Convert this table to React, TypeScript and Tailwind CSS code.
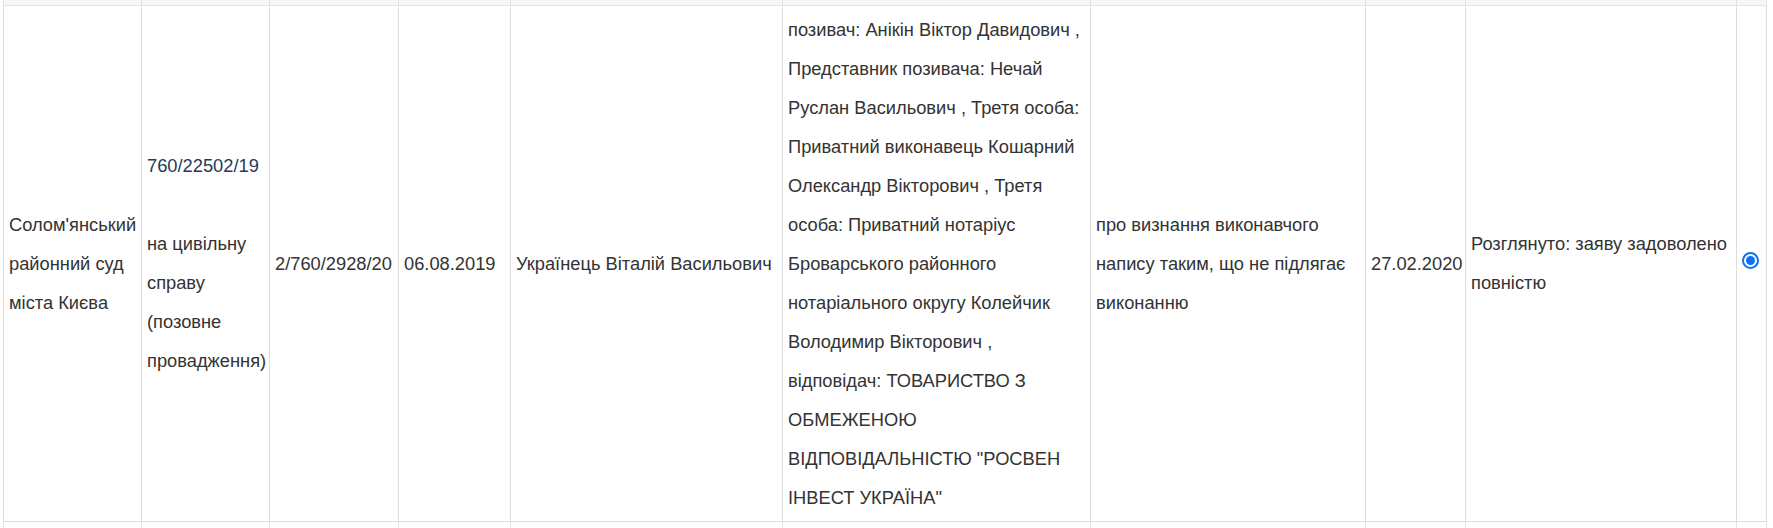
import React from 'react';

type Row = {
    court: string[]
    caseNum: string
    caseKind: string[]
    procNum: string
    date: string
    judge: string
    parties: string[]
    subject: string[]
    decisionDate: string
    status: string[]
}

const row: Row = {
    court: ["Солом'янський", 'районний суд', 'міста Києва'],
    caseNum: '760/22502/19',
    caseKind: ['на цивільну', 'справу', '(позовне', 'провадження)'],
    procNum: '2/760/2928/20',
    date: '06.08.2019',
    judge: 'Українець Віталій Васильович',
    parties: [
        'позивач: Анікін Віктор Давидович ,',
        'Представник позивача: Нечай',
        'Руслан Васильович , Третя особа:',
        'Приватний виконавець Кошарний',
        'Олександр Вікторович , Третя',
        'особа: Приватний нотаріус',
        'Броварського районного',
        'нотаріального округу Колейчик',
        'Володимир Вікторович ,',
        'відповідач: ТОВАРИСТВО З',
        'ОБМЕЖЕНОЮ',
        'ВІДПОВІДАЛЬНІСТЮ "РОСВЕН',
        'ІНВЕСТ УКРАЇНА"',
    ],
    subject: ['про визнання виконавчого', 'напису таким, що не підлягає', 'виконанню'],
    decisionDate: '27.02.2020',
    status: ['Розглянуто: заяву задоволено', 'повністю'],
};

const widths = ['w-[138px]', 'w-[128px]', 'w-[129px]', 'w-[112px]', 'w-[272px]', 'w-[308px]', 'w-[275px]', 'w-[100px]', 'w-[271px]', 'w-[30px]'];

function Lines({lines}: { lines: string[] }) {
    return (
        <>
            {lines.map((l, i) => (
                <React.Fragment key={i}>
                    {i > 0 && <br/>}
                    {l}
                </React.Fragment>
            ))}
        </>
    );
}

const td = "border border-[#dddddd] px-[5px] py-[4px] align-middle whitespace-nowrap";

function App() {
    return (
        <div className="w-[1773px] h-[528px] overflow-hidden bg-white pl-[3px] font-['Liberation_Sans',Arial,sans-serif] text-[18.3px] leading-[39px] text-[#333333]">
            <table className="table-fixed border-collapse w-[1764px] -mt-[1px]">
                <colgroup>
                    {widths.map((w, i) => <col key={i} className={w}/>)}
                </colgroup>
                <tbody>
                <tr className="bg-[#f6f6f6] h-[6px]">
                    {widths.map((_, i) => (
                        <td key={i} className="border border-[#e4e4e4] border-t-0 p-0 h-[6px] leading-[0px]"></td>
                    ))}
                </tr>
                <tr>
                    <td className={td}><Lines lines={row.court}/></td>
                    <td className={td}>
                        <a href="#" className="text-[#1f3a5c]">{row.caseNum}</a>
                        <br/>
                        <br/>
                        <Lines lines={row.caseKind}/>
                    </td>
                    <td className={td}>{row.procNum}</td>
                    <td className={td}>{row.date}</td>
                    <td className={td}>{row.judge}</td>
                    <td className={td}><Lines lines={row.parties}/></td>
                    <td className={td}><Lines lines={row.subject}/></td>
                    <td className={td}>{row.decisionDate}</td>
                    <td className={td}><Lines lines={row.status}/></td>
                    <td className="border border-[#dddddd] p-0 align-middle">
                        <div className="flex justify-center pr-[2px] pb-[6px]">
                            <span className="w-[17px] h-[17px] rounded-full border-[2px] border-[#0b74f6] flex items-center justify-center">
                                <span className="w-[9px] h-[9px] rounded-full bg-[#0b74f6]"></span>
                            </span>
                        </div>
                    </td>
                </tr>
                <tr className="h-[12px]">
                    {widths.map((_, i) => (
                        <td key={i} className="border border-[#e4e4e4] p-0 h-[12px] leading-[0px]"></td>
                    ))}
                </tr>
                </tbody>
            </table>
        </div>
    );
}

export default App;
